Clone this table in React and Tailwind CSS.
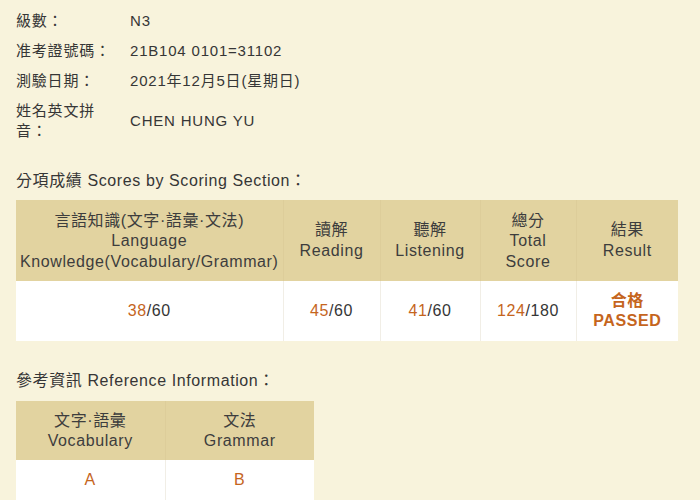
import React from "react";

const font = { fontFamily: '"Liberation Sans", "Noto Sans CJK TC", sans-serif' };

const InfoRow = ({ label, value }) => (
  <div className="flex items-center">
    <div className="w-[100px] mr-[14px] leading-[20px]">{label}</div>
    <div className="leading-[20px]">{value}</div>
  </div>
);

const Score = ({ got, total }) => (
  <span>
    <span className="text-[#c5651d]">{got}</span>/{total}
  </span>
);

export default function App() {
  return (
    <div
      className="w-[700px] h-[500px] overflow-hidden bg-[#f8f3dc] text-[#363636] text-[15px] pl-4 pr-[22px] pt-[11px]"
      style={font}
    >
      <div className="flex flex-col gap-[10px] tracking-[0.8px]">
        <InfoRow label="級數：" value="N3" />
        <InfoRow label="准考證號碼：" value="21B104 0101=31102" />
        <InfoRow label="測驗日期：" value="2021年12月5日(星期日)" />
        <InfoRow label="姓名英文拼音：" value="CHEN HUNG YU" />
      </div>

      <div className="mt-[30px] leading-[20px] text-[16px] tracking-[0.6px]">分項成績 Scores by Scoring Section：</div>

      <table className="mt-[9px] w-[662px] border-collapse text-center leading-[20.5px] text-[16px] tracking-[0.6px]">
        <thead>
          <tr className="bg-[#e2d3a0] text-[#3d3d3d] h-[81px]">
            <th className="font-normal w-[267px] border-r border-[#ddcd9a] pt-[2px]">
              言語知識(文字·語彙·文法)<br />Language<br />Knowledge(Vocabulary/Grammar)
            </th>
            <th className="font-normal w-[97px] border-r border-[#ddcd9a]">讀解<br />Reading</th>
            <th className="font-normal w-[100px] border-r border-[#ddcd9a]">聽解<br />Listening</th>
            <th className="font-normal w-[96px] border-r border-[#ddcd9a] pt-[2px]">總分<br />Total<br />Score</th>
            <th className="font-normal">結果<br />Result</th>
          </tr>
        </thead>
        <tbody>
          <tr className="bg-white h-[60px]">
            <td className="border-r border-[#f1eee6]"><Score got="38" total="60" /></td>
            <td className="border-r border-[#f1eee6]"><Score got="45" total="60" /></td>
            <td className="border-r border-[#f1eee6]"><Score got="41" total="60" /></td>
            <td className="border-r border-[#f1eee6]"><Score got="124" total="180" /></td>
            <td className="text-[#c5651d] font-semibold">合格<br />PASSED</td>
          </tr>
        </tbody>
      </table>

      <div className="mt-[30px] leading-[20px] text-[16px] tracking-[0.6px]">參考資訊 Reference Information：</div>

      <table className="mt-[10px] w-[298px] border-collapse text-center leading-[20px] text-[16px] tracking-[0.6px]">
        <thead>
          <tr className="bg-[#e2d3a0] text-[#3d3d3d] h-[59px]">
            <th className="font-normal w-[149px] border-r border-[#ddcd9a]">文字·語彙<br />Vocabulary</th>
            <th className="font-normal">文法<br />Grammar</th>
          </tr>
        </thead>
        <tbody>
          <tr className="bg-white h-[40px] text-[#c5651d]">
            <td className="border-r border-[#f1eee6]">A</td>
            <td>B</td>
          </tr>
        </tbody>
      </table>
    </div>
  );
}
